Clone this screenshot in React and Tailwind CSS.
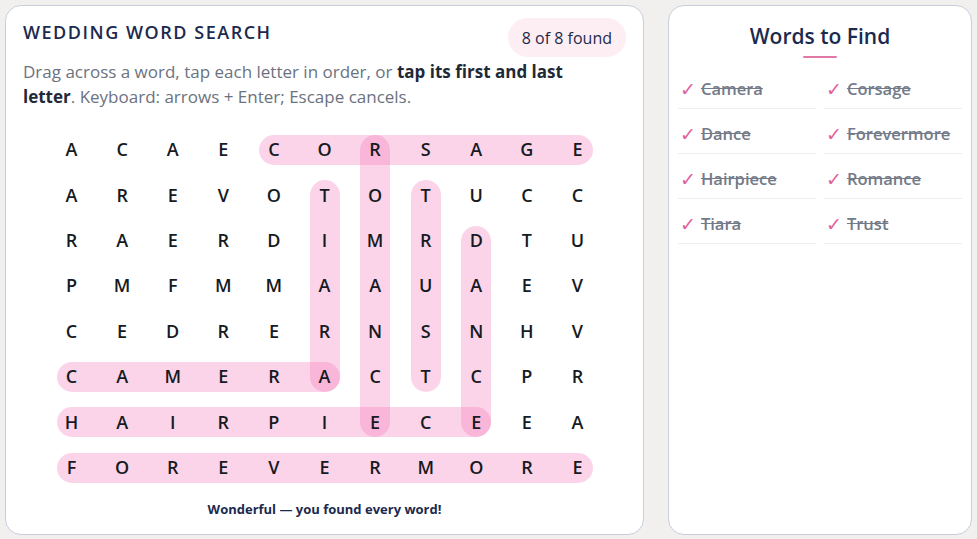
import React from "react";

const GRID = [
    "ACAECORSAGE",
    "AREVOTOTUCC",
    "RAERDIMRDTU",
    "PMFMMAAUAEV",
    "CEDRERNSNHV",
    "CAMERACTCPR",
    "HAIRPIECEEA",
    "FOREVERMORE",
];

const CELL_W = 50.6;
const CELL_H = 45.4;

// [row, col] start and end of each found word
const FOUND = [
    { word: "CORSAGE", from: [0, 4], to: [0, 10] },
    { word: "TIARA", from: [1, 5], to: [5, 5] },
    { word: "ROMANCE", from: [0, 6], to: [6, 6] },
    { word: "TRUST", from: [1, 7], to: [5, 7] },
    { word: "DANCE", from: [2, 8], to: [6, 8] },
    { word: "CAMERA", from: [5, 0], to: [5, 5] },
    { word: "HAIRPIECE", from: [6, 0], to: [6, 8] },
    { word: "FOREVERMORE", from: [7, 0], to: [7, 10] },
];

const WORDS = [
    "Camera", "Corsage",
    "Dance", "Forevermore",
    "Hairpiece", "Romance",
    "Tiara", "Trust",
];

function Highlight({ from, to }) {
    const r = 15;
    const x1 = Math.min(from[1], to[1]) * CELL_W + CELL_W / 2 - r;
    const x2 = Math.max(from[1], to[1]) * CELL_W + CELL_W / 2 + r;
    const y1 = Math.min(from[0], to[0]) * CELL_H + CELL_H / 2 - r;
    const y2 = Math.max(from[0], to[0]) * CELL_H + CELL_H / 2 + r;
    return (
        <div
            className="absolute rounded-full bg-[#f472b6]/30"
            style={{ left: x1, top: y1, width: x2 - x1, height: y2 - y1 }}
        />
    );
}

export default function App() {
    return (
        <div className="h-[539px] w-[977px] bg-[#f1f0ef] p-[5px] flex gap-6 font-['Open_Sans',sans-serif]">
            {/* 퍼즐 */}
            <div className="w-[639px] h-[530px] bg-white border border-[#c9cedd] rounded-2xl px-[17px] pt-[12px] flex flex-col">
                <div className="flex items-start justify-between">
                    <h1 className="text-[18px] leading-7 font-semibold tracking-[0.085em] text-[#1b2a4e]">WEDDING WORD SEARCH</h1>
                    <span className="h-[39px] px-[14px] flex items-center rounded-full bg-[#fdeef4] text-[16px] font-medium text-[#1e2a4a]">
                        8 of 8 found
                    </span>
                </div>
                <p className="mt-[2px] max-w-[585px] text-[17px] leading-[25px] text-[#6b7280]">
                    Drag across a word, tap each letter in order, or{" "}
                    <b className="font-bold text-[#1f2937]">tap its first and last letter</b>. Keyboard: arrows + Enter; Escape cancels.
                </p>

                <div className="relative mx-auto mt-[18px]">
                    {FOUND.map((f) => (
                        <Highlight key={f.word} from={f.from} to={f.to} />
                    ))}
                    <div className="relative grid grid-cols-[repeat(11,50.6px)] auto-rows-[45.4px]">
                        {GRID.map((row, ri) =>
                            row.split("").map((ch, ci) => (
                                <div key={ri + "-" + ci} className="flex items-center justify-center text-[18px] font-semibold text-[#161a22]">
                                    {ch}
                                </div>
                            ))
                        )}
                    </div>
                </div>

                <p className="mt-[10px] text-center text-[13px] font-bold text-[#1b2a4e]">
                    Wonderful — you found every word!
                </p>
            </div>

            {/* 단어 목록 */}
            <div className="w-[304px] h-[530px] bg-white border border-[#c9cedd] rounded-2xl px-[9px] pt-[16px]">
                <h2 className="text-center text-[21px] font-semibold leading-7 text-[#1b2a4e]">Words to Find</h2>
                <div className="mx-auto mt-[6px] w-[34px] h-[2px] rounded-full bg-[#e27aa8]" />
                <ul className="mt-[6px] grid grid-cols-2 gap-x-[8px]">
                    {WORDS.map((w) => (
                        <li key={w} className="h-[45px] flex items-end pb-[9px] pl-[2px] border-b border-[#eceef2] text-[16.5px] leading-5 font-semibold">
                            <span className="text-[#e2609c] mr-[5px] font-['DejaVu_Sans'] font-normal text-[19px]">✓</span>
                            <span className="text-[#737a88] line-through">{w}</span>
                        </li>
                    ))}
                </ul>
            </div>
        </div>
    );
}
